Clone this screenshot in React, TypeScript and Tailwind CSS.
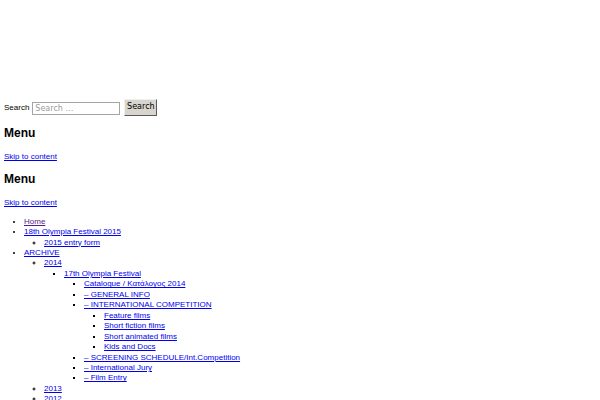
import React from "react";

const A = ({ children, visited = false }: { children: React.ReactNode; visited?: boolean }) => (
  <a href="#" className={visited ? "text-[#551a8b] underline" : "text-[#0000ee] underline"}>
    {children}
  </a>
);

export default function App() {
  return (
    <div
      className="min-h-[400px] bg-white px-[4px] text-[8px] leading-[10.45px] text-black"
      style={{ fontFamily: '"Liberation Sans", Arial, sans-serif' }}
    >
      <div className="h-[99px]" />
      <form className="flex h-[17px] items-center" onSubmit={(e) => e.preventDefault()}>
        <label className="pt-[2px] leading-[10.45px]">Search</label>
        <input
          className="ml-[3px] mt-[1px] h-[13px] w-[88px] border border-[#a5a5a5] bg-white px-[2px] text-[8px] placeholder:text-[#9c9c9c] outline-none"
          placeholder="Search …"
          style={{ fontFamily: '"DejaVu Sans", sans-serif' }}
        />
        <button
          type="button"
          className="ml-[4px] h-[17px] w-[33px] border border-t-[#f0f0f0] border-l-[#f0f0f0] border-r-[#5a5a5a] border-b-[#5a5a5a] bg-[#d8d5ce] p-0 text-center text-[8px] text-black"
          style={{ fontFamily: '"DejaVu Sans", sans-serif' }}
        >
          Search
        </button>
      </form>
      <h2 className="mt-[10px] text-[12px] font-bold leading-[15.6px]">Menu</h2>
      <div className="mt-[10.6px]">
        <A>Skip to content</A>
      </div>
      <h2 className="mt-[9.8px] text-[12px] font-bold leading-[15.6px]">Menu</h2>
      <div className="mt-[10.2px]">
        <A>Skip to content</A>
      </div>
      <ul className="mt-[8px] [list-style-type:disc] pl-[20px]">
        <li>
          <A visited>Home</A>
        </li>
        <li>
          <A>18th Olympia Festival 2015</A>
          <ul className="[list-style-type:circle] pl-[20px]">
            <li>
              <A>2015 entry form</A>
            </li>
          </ul>
        </li>
        <li>
          <A>ARCHIVE</A>
          <ul className="[list-style-type:circle] pl-[20px]">
            <li>
              <A>2014</A>
              <ul className="[list-style-type:square] pl-[20px]">
                <li>
                  <A>17th Olympia Festival</A>
                  <ul className="[list-style-type:square] pl-[20px]">
                    <li>
                      <A>Catalogue / Κατάλογος 2014</A>
                    </li>
                    <li>
                      <A>– GENERAL INFO</A>
                    </li>
                    <li>
                      <A>– INTERNATIONAL COMPETITION</A>
                      <ul className="[list-style-type:square] pl-[20px]">
                        <li>
                          <A>Feature films</A>
                        </li>
                        <li>
                          <A>Short fiction films</A>
                        </li>
                        <li>
                          <A>Short animated films</A>
                        </li>
                        <li>
                          <A>Kids and Docs</A>
                        </li>
                      </ul>
                    </li>
                    <li>
                      <A>– SCREENING SCHEDULE/Int.Competition</A>
                    </li>
                    <li>
                      <A>– International Jury</A>
                    </li>
                    <li>
                      <A>– Film Entry</A>
                    </li>
                  </ul>
                </li>
              </ul>
            </li>
            <li>
              <A>2013</A>
            </li>
            <li>
              <A>2012</A>
            </li>
          </ul>
        </li>
      </ul>
    </div>
  );
}
